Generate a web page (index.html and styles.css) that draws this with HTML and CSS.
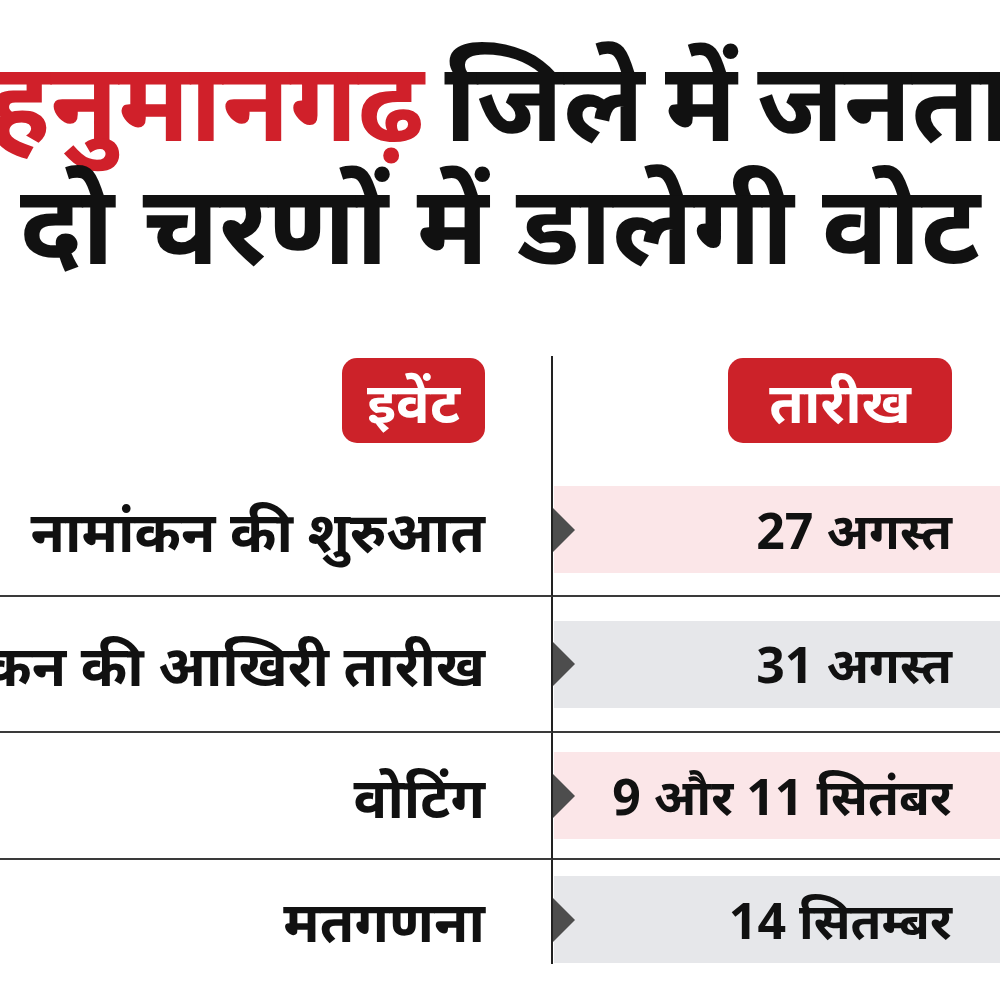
FILE: index.html
```html
<!DOCTYPE html>
<html lang="hi">
<head>
<meta charset="utf-8">
<title>हनुमानगढ़ चुनाव</title>
<link rel="stylesheet" href="styles.css">
</head>
<body>
<div class="page">
  <header class="headline">
    <div class="line line-one"><span class="red">हनुमानगढ़</span> जिले में जनता</div>
    <div class="line">दो चरणों में डालेगी वोट</div>
  </header>
  <section class="table">
    <div class="cell left head"><span class="badge badge-event">इवेंट</span></div>
    <div class="cell right head"><span class="badge badge-date">तारीख</span></div>

    <div class="cell left event">नामांकन की शुरुआत</div>
    <div class="cell right date"><div class="box pink"><span>27 अगस्त</span></div></div>

    <div class="cell left event">नामांकन की आखिरी तारीख</div>
    <div class="cell right date"><div class="box gray"><span>31 अगस्त</span></div></div>

    <div class="cell left event">वोटिंग</div>
    <div class="cell right date"><div class="box pink"><span>9 और 11 सितंबर</span></div></div>

    <div class="cell left event last">मतगणना</div>
    <div class="cell right date last"><div class="box gray"><span>14 सितम्बर</span></div></div>
  </section>
</div>
</body>
</html>
```

FILE: styles.css
```css
html, body {
  margin: 0;
  padding: 0;
  background: #fff;
}
body {
  width: 1000px;
  height: 1000px;
  overflow: hidden;
  font-family: "Noto Sans", "Noto Sans Devanagari", "Lohit Devanagari", sans-serif;
  color: #111;
}
.page {
  width: 1000px;
  padding-top: 37px;
}
.headline {
  display: flex;
  flex-direction: column;
  align-items: center;
  font-weight: 700;
  font-size: 110px;
  line-height: 123px;
}
.line {
  white-space: nowrap;
}
.line-one { word-spacing: -8px; }
.red { color: #d0202a; }

.table {
  margin-top: 73px;
  display: grid;
  grid-template-columns: 553px 1fr;
  grid-template-rows: 108px 133px 136px 127px 104px;
}
.cell {
  display: flex;
  align-items: center;
  box-sizing: border-box;
  min-width: 0;
}
.left {
  justify-content: flex-end;
  padding-right: 66px;
  border-right: 2px solid #222;
}
.head { align-items: flex-start; padding-top: 2px; }
.right.head { justify-content: flex-end; padding-right: 48px; }
.badge {
  background: #cc2229;
  color: #fff;
  font-weight: 700;
  font-size: 56px;
  border-radius: 15px;
  height: 85px;
  display: flex;
  align-items: center;
  justify-content: center;
}
.badge-event { width: 143px; }
.badge-date { width: 224px; }
.event, .date {
  border-bottom: 2px solid #3a3a3a;
  font-weight: 700;
}
.event {
  font-size: 56px;
  line-height: 88px;
  white-space: nowrap;
}
.last {
  border-bottom: none;
  align-items: flex-start;
  padding-top: 16px;
}
.date { padding-left: 1px; }
.box {
  position: relative;
  flex: 1;
  height: 87px;
  display: flex;
  align-items: center;
  justify-content: flex-end;
  padding-right: 48px;
  font-size: 50px;
  white-space: nowrap;
}
.box::before {
  content: "";
  position: absolute;
  left: -1px;
  top: 50%;
  transform: translateY(-50%);
  border-top: 22px solid transparent;
  border-bottom: 22px solid transparent;
  border-left: 22px solid #4d4d4d;
}
.pink { background: #fbe6e8; }
.gray { background: #e6e7ea; }
```
